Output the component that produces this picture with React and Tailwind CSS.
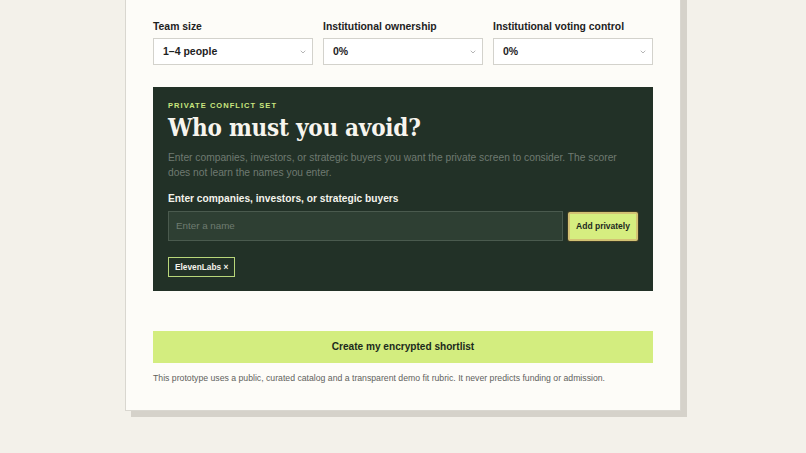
import { ChevronDown } from "lucide-react";

const selects = [
  { label: "Team size", value: "1–4 people" },
  { label: "Institutional ownership", value: "0%" },
  { label: "Institutional voting control", value: "0%" },
];

function SelectField({ label, value }) {
  return (
    <div className="flex flex-col">
      <label className="mb-[4px] text-[10.4px] font-bold leading-[14px] text-[#1d221e]">{label}</label>
      <div className="flex h-[27px] items-center justify-between border border-[#d3d2cc] bg-white pl-[9px] pr-[5px]">
        <span className="text-[10.5px] font-bold text-[#1d221e]">{value}</span>
        <ChevronDown size={8} strokeWidth={1.5} className="text-[#6b6b6b]" />
      </div>
    </div>
  );
}

export default function App() {
  return (
    <div className="h-[453px] w-full overflow-hidden bg-[#f3f1ea] font-['Liberation_Sans',Arial,sans-serif]">
      <div className="ml-[125px] mt-[-10px] w-[556px] border border-[#d9d7d0] bg-[#fdfcf8] px-[27px] pb-[26px] pt-[29px] shadow-[6px_6px_0_#d5d2ca]">
        <div className="grid grid-cols-3 gap-[10px]">
          {selects.map((s) => (
            <SelectField key={s.label} {...s} />
          ))}
        </div>

        {/* Private conflict set */}
        <div className="mt-[22px] bg-[#223127] px-[15px] pb-[14px] pt-[14px]">
          <p className="text-[7.5px] font-bold uppercase leading-[10px] tracking-[0.14em] text-[#cbe77f]">
            Private conflict set
          </p>
          <h2 className="mt-[2px] font-['DejaVu_Serif_Condensed','DejaVu_Serif',serif] text-[24px] font-bold leading-[30px] tracking-[-0.01em] text-[#f7f5ee]">
            Who must you avoid?
          </h2>
          <p className="mt-[7px] text-[10.25px] leading-[15px] text-[#6f7a71]">
            Enter companies, investors, or strategic buyers you want the private screen to consider. The scorer does not learn the names you enter.
          </p>
          <p className="mt-[12px] text-[10.2px] font-bold leading-[14px] text-[#f4f3ec]">
            Enter companies, investors, or strategic buyers
          </p>
          <div className="mt-[5px] flex items-center gap-[5px]">
            <div className="flex h-[30px] flex-1 items-center border border-[#4a5a4e] bg-[#2e3f33] px-[7px]">
              <span className="text-[9.8px] text-[#6e7c71]">Enter a name</span>
            </div>
            <button className="h-[29px] w-[70px] whitespace-nowrap rounded-[2px] border-2 border-[#d3c274] bg-[#d6ee80] text-[8.5px] font-bold text-[#1d2a1f] shadow-[0_0_0_1px_#3b3a25]">
              Add privately
            </button>
          </div>
          <div className="mt-[16px] flex">
            <span className="flex h-[20px] items-center border border-[#b8d67a] px-[6px] text-[8.3px] font-bold text-[#f4f3ec]">
              ElevenLabs ×
            </span>
          </div>
        </div>

        <button className="mt-[40px] h-[32px] w-full bg-[#d3ed7f] text-[10.1px] font-bold text-[#1b2a1c]">
          Create my encrypted shortlist
        </button>
        <p className="mt-[9px] text-[8.7px] leading-[12px] text-[#5f625d]">
          This prototype uses a public, curated catalog and a transparent demo fit rubric. It never predicts funding or admission.
        </p>
      </div>
    </div>
  );
}
